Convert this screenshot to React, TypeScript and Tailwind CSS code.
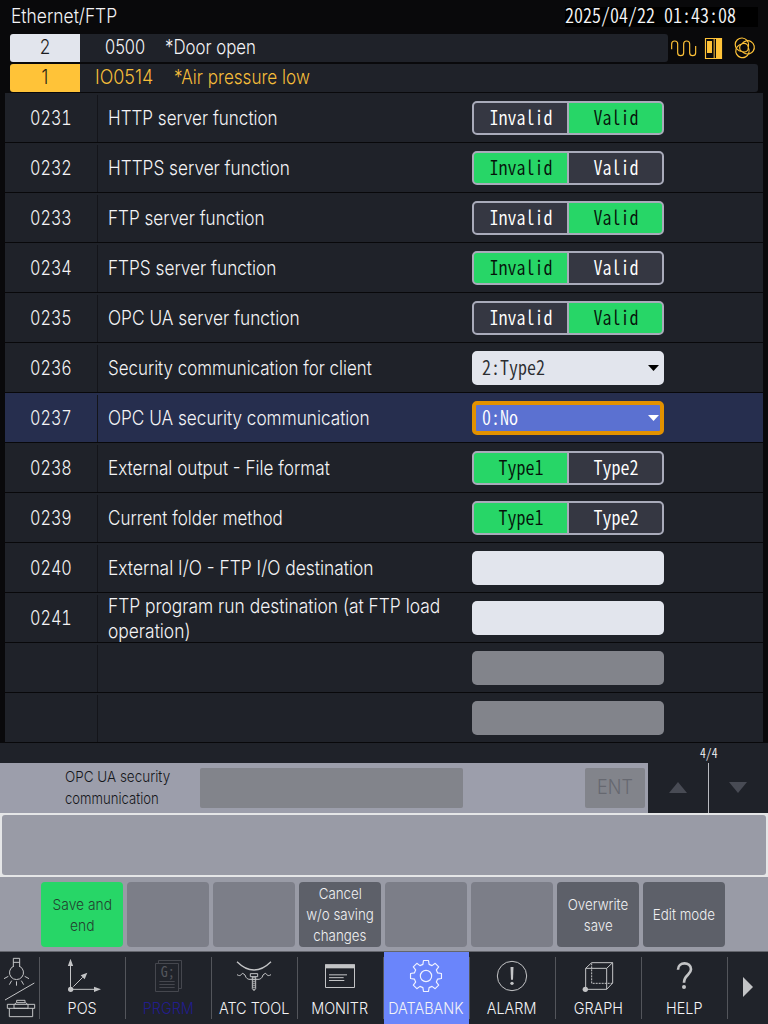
import type { ReactNode } from "react";

type Row = {
  no?: string;
  label?: string[];
  fit?: string;
  kind: "switch" | "select" | "input" | "disabled";
  options?: string[];
  value?: string;
  active?: boolean;
};

const INVALID_VALID = ["Invalid", "Valid"];
const TYPES = ["Type1", "Type2"];

const ROWS: Row[] = [
  { no: "0231", label: ["HTTP server function"], fit: "scale-x-[0.853]", kind: "switch", options: INVALID_VALID, value: "Valid" },
  { no: "0232", label: ["HTTPS server function"], kind: "switch", options: INVALID_VALID, value: "Invalid" },
  { no: "0233", label: ["FTP server function"], fit: "scale-x-[0.855]", kind: "switch", options: INVALID_VALID, value: "Valid" },
  { no: "0234", label: ["FTPS server function"], kind: "switch", options: INVALID_VALID, value: "Invalid" },
  { no: "0235", label: ["OPC UA server function"], fit: "scale-x-[0.864]", kind: "switch", options: INVALID_VALID, value: "Valid" },
  { no: "0236", label: ["Security communication for client"], fit: "scale-x-[0.846]", kind: "select", value: "2:Type2" },
  { no: "0237", label: ["OPC UA security communication"], kind: "select", value: "0:No", active: true },
  { no: "0238", label: ["External output - File format"], fit: "scale-x-[0.857]", kind: "switch", options: TYPES, value: "Type1" },
  { no: "0239", label: ["Current folder method"], fit: "scale-x-[0.85]", kind: "switch", options: TYPES, value: "Type1" },
  { no: "0240", label: ["External I/O - FTP I/O destination"], fit: "scale-x-[0.869]", kind: "input" },
  { no: "0241", label: ["FTP program run destination (at FTP load", "operation)"], fit: "scale-x-[0.869]", kind: "input" },
  { kind: "disabled" },
  { kind: "disabled" },
];

const SOFT_KEYS: { lines: string[]; tone: "green" | "dark" | "empty" }[] = [
  { lines: ["Save and", "end"], tone: "green" },
  { lines: [], tone: "empty" },
  { lines: [], tone: "empty" },
  { lines: ["Cancel", "w/o saving", "changes"], tone: "dark" },
  { lines: [], tone: "empty" },
  { lines: [], tone: "empty" },
  { lines: ["Overwrite", "save"], tone: "dark" },
  { lines: ["Edit mode"], tone: "dark" },
];

const TONES = {
  green: "bg-[#27d667] text-[#23402f]",
  dark: "bg-[#5d6069] text-[#f0f0f2]",
  empty: "bg-[#7c7e88]",
};

// Condensed text: the panel uses a narrow light grotesque
function T({
  children,
  fit = "scale-x-[0.86]",
  className = "origin-left",
}: {
  children: ReactNode;
  fit?: string;
  className?: string;
}) {
  return <span className={`block whitespace-nowrap ${fit} ${className}`}>{children}</span>;
}

function Mono({ children, className = "" }: { children: ReactNode; className?: string }) {
  return (
    <span
      className={`block scale-x-90 whitespace-nowrap font-['Noto_Sans_CJK_JP',monospace] text-[20px] leading-[28px] font-[350] [font-feature-settings:'hwid'] ${className}`}
    >
      {children}
    </span>
  );
}

function Switch({ options, value }: { options: string[]; value?: string }) {
  return (
    <div className="flex h-[34px] w-[192px] gap-[2px] overflow-hidden rounded-[5px] border-2 border-[#a9abba] bg-[#a9abba]">
      {options.map((o) => (
        <div
          key={o}
          className={`flex w-[93px] items-center justify-center pb-[2px] ${
            o === value ? "bg-[#27d667] text-[#06140b]" : "bg-[#353742] text-white"
          }`}
        >
          <Mono>{o}</Mono>
        </div>
      ))}
    </div>
  );
}

function Select({ value, active }: { value?: string; active?: boolean }) {
  return (
    <div
      className={`flex h-[34px] w-[192px] items-center justify-between rounded-[5px] border-4 pl-[6px] ${
        active
          ? "border-[#e29100] bg-[#5b71d1] text-white"
          : "border-[#e2e5ed] bg-[#e2e5ed] text-[#2c2d31]"
      }`}
    >
      <Mono className="mb-[2px] origin-left">{value}</Mono>
      <svg
        className={`mr-[1px] mb-[1px] h-[6px] w-[11px] ${active ? "fill-white" : "fill-black"}`}
        viewBox="0 0 11 6"
      >
        <path d="M0 0h11L5.5 6z" />
      </svg>
    </div>
  );
}

function Control({ row }: { row: Row }) {
  if (row.kind === "switch") return <Switch options={row.options || []} value={row.value} />;
  if (row.kind === "select") return <Select value={row.value} active={row.active} />;
  return (
    <div
      className={`h-[34px] w-[192px] rounded-[5px] ${
        row.kind === "input" ? "bg-[#e2e5ed]" : "bg-[#82848b]"
      }`}
    />
  );
}

function TableRow({ row }: { row: Row }) {
  return (
    <div
      className={`flex h-[50px] border-b border-[#08080a] text-[20px] leading-[25px] text-[#f4f4f6] ${
        row.active ? "bg-[#262e4e]" : "bg-[#1f2229]"
      }`}
    >
      <div className="flex w-[92px] items-center justify-center pt-[2px]">
        <T fit="scale-x-[0.81]" className="tabular-nums">
          {row.no}
        </T>
      </div>
      <div className="mt-[2px] w-px bg-[#14151a]" />
      <div className="flex w-[374px] flex-col justify-center pt-[2px] pl-[10px]">
        {row.label?.map((l) => (
          <T key={l} fit={row.fit}>
            {l}
          </T>
        ))}
      </div>
      <div className="pt-2">
        <Control row={row} />
      </div>
    </div>
  );
}

function StatusIcons() {
  return (
    <svg className="h-[28px] w-[90px]" viewBox="0 0 270 84" fill="none" stroke="#ffc338" strokeWidth="3.5">
      <path d="M11 46V30q0-9 9-9t9 9v26q0 9 9 9t9-9V30q0-9 9-9t9 9v26q0 9 9 9t9-9V36" />
      <path d="M112.500 13.500h48v60h-48z" />
      <path d="M117 21h15v36h-15zM144 12h18v63h-18z" fill="#ffc338" stroke="none" />
      <path d="M138.500 14v60" strokeWidth="3" />
      <circle cx="228" cy="41" r="13" />
      {[0, 120, 240].map((deg) => (
        <circle
          key={deg}
          cx="228"
          cy="30"
          r="20"
          strokeDasharray="100 26"
          transform={`rotate(${deg - 35} 228 41) rotate(127 228 30)`}
        />
      ))}
    </svg>
  );
}

function LampToolIcon() {
  return (
    <svg className="h-[72px] w-[39px]" viewBox="0 246 117 216" fill="none" stroke="#c3c4c6" strokeWidth="3">
      <path d="M40 291v-26h19v26M40 277h19" />
      <path d="M40 289a21 21 0 1 0 19 0" />
      <path d="M25 319l-13 7M35 332l-7 12M49.500 334v13M64 332l7 12M74 319l13 7" />
      <path d="M15 390L103 339" />
      <path d="M22 403h82v12H22zM28 415v25h70v-25M42 403v12h42v-12M43 403l6-5h28l6 5M50 397v-6h25v6" />
    </svg>
  );
}

const GEAR = (() => {
  const pts: string[] = [];
  for (let i = 0; i < 8; i++) {
    const base = (i * Math.PI) / 4 - Math.PI / 2;
    const steps: [number, number][] = [
      [-0.26, 36],
      [-0.16, 47],
      [0.16, 47],
      [0.26, 36],
    ];
    steps.forEach(([a, r]) => {
      const x = (126 + r * Math.cos(base + a)).toFixed(1);
      const y = (72 + r * Math.sin(base + a)).toFixed(1);
      pts.push(`${x} ${y}`);
    });
  }
  return `M${pts.join("L")}Z`;
})();

const ICONS: Record<string, ReactNode> = {
  POS: (
    <g>
      <path d="M91.500 112V40M92 112h76M100 104l28-28" />
      <path d="M91.500 20l8 22h-16zM183 112l-21 8v-16zM142 62l-8 20-12-12z" fill="#c3c4c6" stroke="none" />
      <circle cx="92" cy="112" r="8" fill="#c3c4c6" stroke="none" />
    </g>
  ),
  PRGRM: (
    <g stroke="#45474e">
      <path d="M88.500 34.500h69v84h-69zM97.500 34v-8.500h69v84h-9M100 88.500h46M100 97.500h46M100 106.500h46" />
      <text
        x="104"
        y="76"
        fill="#54565d"
        stroke="none"
        fontSize="42"
        fontFamily="Noto Sans Mono CJK JP, monospace"
      >
        G;
      </text>
    </g>
  ),
  "ATC TOOL": (
    <g>
      <path d="M75 29q51 50 102 0" strokeWidth="4" />
      <path d="M75 68q10 6 13-1t11 2q4 15 18 13h18q14 2 18-13q8-9 11-2t13 1" />
      <path d="M115 65h22v9h-22zM121 74v36l5 6 5-6V74" />
      <path d="M126 76v38" strokeDasharray="3 3" strokeWidth="5" />
    </g>
  ),
  MONITR: (
    <g>
      <path d="M82.500 38.500h87v68h-87z" />
      <path d="M81 37h90v12H81z" fill="#c3c4c6" stroke="none" />
      <path d="M93 68.500h54M93 77h44M93 85.500h46" />
    </g>
  ),
  DATABANK: (
    <g stroke="#f0f2ff" strokeWidth="3.500">
      <path d={GEAR} strokeLinejoin="round" />
      <circle cx="126" cy="72" r="17" />
    </g>
  ),
  ALARM: (
    <g>
      <circle cx="126" cy="72" r="44" />
      <path d="M121.500 45h9l-1.500 38h-6z" fill="#c3c4c6" stroke="none" />
      <circle cx="126" cy="94" r="5" fill="#c3c4c6" stroke="none" />
    </g>
  ),
  GRAPH: (
    <g>
      <path d="M89 108V49h63v63H92M89 49l18-17h63v61l-18 19M152 49l18-17" />
      <path d="M107 34v60h62" strokeDasharray="6 3" />
      <circle cx="88" cy="112" r="8" fill="#c3c4c6" stroke="none" />
    </g>
  ),
  HELP: (
    <g>
      <path d="M108 53C108 28 147 28 147 52C147 69 126 68 126 92" strokeWidth="8" />
      <circle cx="126" cy="105" r="6" fill="#c3c4c6" stroke="none" />
    </g>
  ),
};

function NavBar() {
  return (
    <div className="flex h-[73px] border-t border-[#63656c] bg-[#20232a]">
      <LampToolIcon />
      <div className="mt-[5px] h-[62px] w-px bg-[#53555b]" />
      {Object.keys(ICONS).map((name) => (
        <div key={name} className="flex w-[86px]">
          <div
            className={`flex w-[85px] flex-col items-center ${name === "DATABANK" ? "bg-[#6a85fb]" : ""}`}
          >
            <svg className="h-[45px] w-[85px] shrink-0" viewBox="0 0 255 135" fill="none" stroke="#c3c4c6" strokeWidth="3">
              {ICONS[name]}
            </svg>
            <T
              fit="scale-x-[0.9]"
              className={`mr-px text-[16px] leading-[22px] ${
                name === "PRGRM" ? "text-[#221d8c]" : "text-[#f4f4f6]"
              }`}
            >
              {name}
            </T>
          </div>
          <div className="mt-[5px] h-[62px] w-px bg-[#53555b]" />
        </div>
      ))}
      <svg className="h-[72px] w-[40px]" viewBox="0 0 120 216" fill="#c3c4c6">
        <path d="M45 75l30 30-30 30z" />
      </svg>
    </div>
  );
}

export default function App() {
  return (
    <div className="flex h-[1024px] w-[768px] flex-col overflow-hidden bg-[#09090b] font-['Inter','Liberation_Sans',sans-serif] font-light text-[#f4f4f6]">
      {/* Title bar */}
      <div className="flex h-[34px] justify-between pr-[10px] pl-[11px] text-[20px]">
        <T fit="scale-x-[0.87]" className="origin-left pt-[2px] leading-[28px]">
          Ethernet/FTP
        </T>
        <div className="mt-[7px] h-[20px] w-[193px] bg-black">
          <Mono className="-mt-[6px] origin-left">2025/04/22 01:43:08</Mono>
        </div>
      </div>

      {/* Alarm lines */}
      <div className="flex h-[28px] pl-[10px] text-[20px] leading-[26px]">
        <div className="w-[70px] rounded-l-[3px] bg-[#e2e5ed] text-center text-[#1c1d22]">
          <T className="">2</T>
        </div>
        <div className="flex w-[588px] rounded-r-[3px] bg-[#1f2229] pl-[25px]">
          <T fit="scale-x-[0.82]" className="w-[60px] origin-left">
            0500
          </T>
          <T fit="scale-x-[0.84]">*Door open</T>
        </div>
        <StatusIcons />
      </div>
      <div className="mt-[2px] flex h-[28px] pl-[10px] text-[20px] leading-[26px]">
        <div className="w-[70px] rounded-l-[3px] bg-[#ffc338] text-center text-[#2a2414]">
          <T className="">1</T>
        </div>
        <div className="flex w-[678px] rounded-r-[3px] bg-[#1f2229] pl-[15px] text-[#f5bd3a]">
          <T fit="scale-x-[0.895]" className="w-[79px] origin-left">
            IO0514
          </T>
          <T fit="scale-x-[0.855]">*Air pressure low</T>
        </div>
      </div>

      {/* Parameter table */}
      <div className="mt-px mr-[5px] ml-[5px]">
        {ROWS.map((row, i) => (
          <TableRow key={i} row={row} />
        ))}
      </div>

      {/* Input line and page buttons */}
      <div className="flex h-[70px] bg-[#1f2229]">
        <div className="mt-[20px] flex w-[648px] bg-[#9c9eab] pt-[5px]">
          <div className="w-[200px] pl-[65px] text-[15px] leading-[22px] text-[#15161a]">
            <div className="-mt-[2px]">
              <T fit="scale-x-[0.9]">OPC UA security</T>
              <T fit="scale-x-[0.875]">communication</T>
            </div>
          </div>
          <div className="h-[40px] w-[263px] rounded-[2px] bg-[#82848b]" />
          <div className="ml-[122px] h-[40px] w-[60px] rounded-[2px] bg-[#82848b] text-center text-[20px] leading-[38px] text-[#666870]">
            <T fit="scale-x-[0.9]" className="">
              ENT
            </T>
          </div>
        </div>
        <div className="flex w-[120px] flex-col">
          <div className="flex h-[20px] justify-center pl-[2px]">
            <span className="block scale-x-90 font-['Noto_Sans_CJK_JP',monospace] text-[13px] leading-[20px] font-[350] [font-feature-settings:'hwid']">
              4/4
            </span>
          </div>
          <div className="flex h-[50px]">
            <div className="flex w-[60px] items-center justify-center">
              <svg className="mb-[2px] h-[11px] w-[18px]" viewBox="0 0 18 11" fill="#484b54">
                <path d="M9 0l9 11H0z" />
              </svg>
            </div>
            <div className="w-px bg-[#b9bac0]" />
            <div className="flex w-[58px] items-center justify-center">
              <svg className="mb-[2px] h-[11px] w-[18px]" viewBox="0 0 18 11" fill="#484b54">
                <path d="M0 0h18L9 11z" />
              </svg>
            </div>
          </div>
        </div>
      </div>

      {/* Message box */}
      <div className="h-[64px] bg-[#e5e6e7] p-[2px]">
        <div className="h-[60px] rounded-[3px] bg-[#999ba6]" />
      </div>

      {/* Soft keys */}
      <div className="flex h-[74px] gap-1 bg-[#999ba6] pt-[5px] pl-[41px]">
        {SOFT_KEYS.map((k, i) => (
          <div
            key={i}
            className={`flex h-[65px] w-[82px] flex-col items-center justify-center rounded-[4px] text-[15px] leading-[21px] ${TONES[k.tone]}`}
          >
            {k.lines.map((l) => (
              <T key={l} fit={k.tone === "green" ? "scale-x-[0.92]" : "scale-x-[0.89]"} className="">
                {l}
              </T>
            ))}
          </div>
        ))}
      </div>

      <NavBar />
    </div>
  );
}
